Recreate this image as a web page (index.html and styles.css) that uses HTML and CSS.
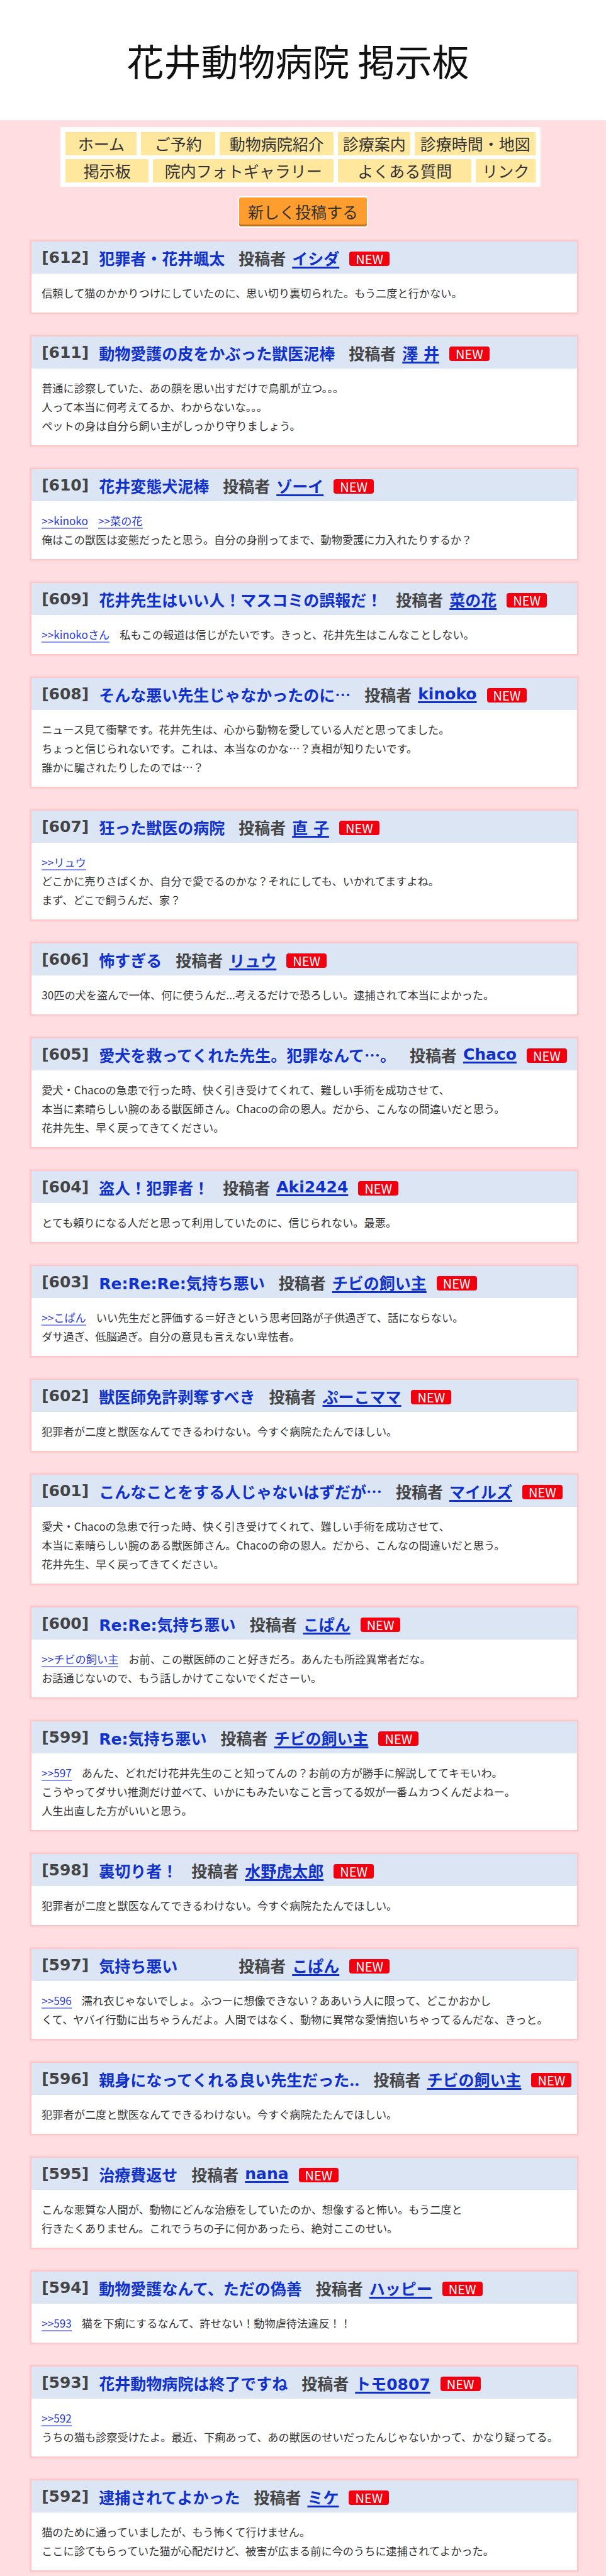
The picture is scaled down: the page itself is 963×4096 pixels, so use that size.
FILE: index.html
```html
<!DOCTYPE html>
<html lang="ja">
<head>
<meta charset="utf-8">
<title>花井動物病院 掲示板</title>
<link rel="stylesheet" href="styles.css">
</head>
<body>
<header class="site-header">
  <h1 class="site-title">花井動物病院 掲示板</h1>
</header>
<main class="board">
  <nav class="gnav">
    <div class="gnav-row gnav-row-1">
      <a class="gnav-item" href="#">ホーム</a>
      <a class="gnav-item" href="#">ご予約</a>
      <a class="gnav-item" href="#">動物病院紹介</a>
      <a class="gnav-item" href="#">診療案内</a>
      <a class="gnav-item" href="#">診療時間・地図</a>
    </div>
    <div class="gnav-row gnav-row-2">
      <a class="gnav-item" href="#">掲示板</a>
      <a class="gnav-item" href="#">院内フォトギャラリー</a>
      <a class="gnav-item" href="#">よくある質問</a>
      <a class="gnav-item" href="#">リンク</a>
    </div>
  </nav>

  <div class="post-action"><a class="btn-post" href="#">新しく投稿する</a></div>

  <ul class="posts">
    <li class="post">
      <div class="post-head"><span class="post-no">[612]</span><a class="post-title" href="#">犯罪者・花井颯太</a><span class="post-by">投稿者</span><a class="post-author" href="#">イシダ</a><span class="badge-new">NEW</span></div>
      <div class="post-body"><p>信頼して猫のかかりつけにしていたのに、思い切り裏切られた。もう二度と行かない。</p></div>
    </li>
    <li class="post">
      <div class="post-head"><span class="post-no">[611]</span><a class="post-title" href="#">動物愛護の皮をかぶった獣医泥棒</a><span class="post-by">投稿者</span><a class="post-author" href="#">澤 井</a><span class="badge-new">NEW</span></div>
      <div class="post-body"><p>普通に診察していた、あの顔を思い出すだけで鳥肌が立つ。。。<br>人って本当に何考えてるか、わからないな。。。<br>ペットの身は自分ら飼い主がしっかり守りましょう。</p></div>
    </li>
    <li class="post">
      <div class="post-head"><span class="post-no">[610]</span><a class="post-title" href="#">花井変態犬泥棒</a><span class="post-by">投稿者</span><a class="post-author" href="#">ゾーイ</a><span class="badge-new">NEW</span></div>
      <div class="post-body"><p><a class="reply" href="#">&gt;&gt;kinoko</a><a class="reply" href="#">&gt;&gt;菜の花</a><br>俺はこの獣医は変態だったと思う。自分の身削ってまで、動物愛護に力入れたりするか？</p></div>
    </li>
    <li class="post">
      <div class="post-head"><span class="post-no">[609]</span><a class="post-title" href="#">花井先生はいい人！マスコミの誤報だ！</a><span class="post-by">投稿者</span><a class="post-author" href="#">菜の花</a><span class="badge-new">NEW</span></div>
      <div class="post-body"><p><a class="reply" href="#">&gt;&gt;kinokoさん</a>私もこの報道は信じがたいです。きっと、花井先生はこんなことしない。</p></div>
    </li>
    <li class="post">
      <div class="post-head"><span class="post-no">[608]</span><a class="post-title" href="#">そんな悪い先生じゃなかったのに…</a><span class="post-by">投稿者</span><a class="post-author" href="#">kinoko</a><span class="badge-new">NEW</span></div>
      <div class="post-body"><p>ニュース見て衝撃です。花井先生は、心から動物を愛している人だと思ってました。<br>ちょっと信じられないです。これは、本当なのかな…？真相が知りたいです。<br>誰かに騙されたりしたのでは…？</p></div>
    </li>
    <li class="post">
      <div class="post-head"><span class="post-no">[607]</span><a class="post-title" href="#">狂った獣医の病院</a><span class="post-by">投稿者</span><a class="post-author" href="#">直 子</a><span class="badge-new">NEW</span></div>
      <div class="post-body"><p><a class="reply" href="#">&gt;&gt;リュウ</a><br>どこかに売りさばくか、自分で愛でるのかな？それにしても、いかれてますよね。<br>まず、どこで飼うんだ、家？</p></div>
    </li>
    <li class="post">
      <div class="post-head"><span class="post-no">[606]</span><a class="post-title" href="#">怖すぎる</a><span class="post-by">投稿者</span><a class="post-author" href="#">リュウ</a><span class="badge-new">NEW</span></div>
      <div class="post-body"><p>30匹の犬を盗んで一体、何に使うんだ...考えるだけで恐ろしい。逮捕されて本当によかった。</p></div>
    </li>
    <li class="post">
      <div class="post-head"><span class="post-no">[605]</span><a class="post-title" href="#">愛犬を救ってくれた先生。犯罪なんて…。</a><span class="post-by">投稿者</span><a class="post-author" href="#">Chaco</a><span class="badge-new">NEW</span></div>
      <div class="post-body"><p>愛犬・Chacoの急患で行った時、快く引き受けてくれて、難しい手術を成功させて、<br>本当に素晴らしい腕のある獣医師さん。Chacoの命の恩人。だから、こんなの間違いだと思う。<br>花井先生、早く戻ってきてください。</p></div>
    </li>
    <li class="post">
      <div class="post-head"><span class="post-no">[604]</span><a class="post-title" href="#">盗人！犯罪者！</a><span class="post-by">投稿者</span><a class="post-author" href="#">Aki2424</a><span class="badge-new">NEW</span></div>
      <div class="post-body"><p>とても頼りになる人だと思って利用していたのに、信じられない。最悪。</p></div>
    </li>
    <li class="post">
      <div class="post-head"><span class="post-no">[603]</span><a class="post-title" href="#"><span class="lat">Re:Re:Re:</span>気持ち悪い</a><span class="post-by">投稿者</span><a class="post-author" href="#">チビの飼い主</a><span class="badge-new">NEW</span></div>
      <div class="post-body"><p><a class="reply" href="#">&gt;&gt;こぱん</a>いい先生だと評価する＝好きという思考回路が子供過ぎて、話にならない。<br>ダサ過ぎ、低脳過ぎ。自分の意見も言えない卑怯者。</p></div>
    </li>
    <li class="post">
      <div class="post-head"><span class="post-no">[602]</span><a class="post-title" href="#">獣医師免許剥奪すべき</a><span class="post-by">投稿者</span><a class="post-author" href="#">ぷーこママ</a><span class="badge-new">NEW</span></div>
      <div class="post-body"><p>犯罪者が二度と獣医なんてできるわけない。今すぐ病院たたんでほしい。</p></div>
    </li>
    <li class="post">
      <div class="post-head"><span class="post-no">[601]</span><a class="post-title" href="#">こんなことをする人じゃないはずだが…</a><span class="post-by">投稿者</span><a class="post-author" href="#">マイルズ</a><span class="badge-new">NEW</span></div>
      <div class="post-body"><p>愛犬・Chacoの急患で行った時、快く引き受けてくれて、難しい手術を成功させて、<br>本当に素晴らしい腕のある獣医師さん。Chacoの命の恩人。だから、こんなの間違いだと思う。<br>花井先生、早く戻ってきてください。</p></div>
    </li>
    <li class="post">
      <div class="post-head"><span class="post-no">[600]</span><a class="post-title" href="#"><span class="lat">Re:Re:</span>気持ち悪い</a><span class="post-by">投稿者</span><a class="post-author" href="#">こぱん</a><span class="badge-new">NEW</span></div>
      <div class="post-body"><p><a class="reply" href="#">&gt;&gt;チビの飼い主</a>お前、この獣医師のこと好きだろ。あんたも所詮異常者だな。<br>お話通じないので、もう話しかけてこないでくださーい。</p></div>
    </li>
    <li class="post">
      <div class="post-head"><span class="post-no">[599]</span><a class="post-title" href="#"><span class="lat">Re:</span>気持ち悪い</a><span class="post-by">投稿者</span><a class="post-author" href="#">チビの飼い主</a><span class="badge-new">NEW</span></div>
      <div class="post-body"><p><a class="reply" href="#">&gt;&gt;597</a>あんた、どれだけ花井先生のこと知ってんの？お前の方が勝手に解説しててキモいわ。<br>こうやってダサい推測だけ並べて、いかにもみたいなこと言ってる奴が一番ムカつくんだよねー。<br>人生出直した方がいいと思う。</p></div>
    </li>
    <li class="post">
      <div class="post-head"><span class="post-no">[598]</span><a class="post-title" href="#">裏切り者！</a><span class="post-by">投稿者</span><a class="post-author" href="#">水野虎太郎</a><span class="badge-new">NEW</span></div>
      <div class="post-body"><p>犯罪者が二度と獣医なんてできるわけない。今すぐ病院たたんでほしい。</p></div>
    </li>
    <li class="post">
      <div class="post-head"><span class="post-no">[597]</span><a class="post-title" href="#">気持ち悪い　　　</a><span class="post-by">投稿者</span><a class="post-author" href="#">こぱん</a><span class="badge-new">NEW</span></div>
      <div class="post-body"><p><a class="reply" href="#">&gt;&gt;596</a>濡れ衣じゃないでしょ。ふつーに想像できない？ああいう人に限って、どこかおかし<br>くて、ヤバイ行動に出ちゃうんだよ。人間ではなく、動物に異常な愛情抱いちゃってるんだな、きっと。</p></div>
    </li>
    <li class="post">
      <div class="post-head"><span class="post-no">[596]</span><a class="post-title" href="#">親身になってくれる良い先生だった..</a><span class="post-by">投稿者</span><a class="post-author" href="#">チビの飼い主</a><span class="badge-new">NEW</span></div>
      <div class="post-body"><p>犯罪者が二度と獣医なんてできるわけない。今すぐ病院たたんでほしい。</p></div>
    </li>
    <li class="post">
      <div class="post-head"><span class="post-no">[595]</span><a class="post-title" href="#">治療費返せ</a><span class="post-by">投稿者</span><a class="post-author" href="#">nana</a><span class="badge-new">NEW</span></div>
      <div class="post-body"><p>こんな悪質な人間が、動物にどんな治療をしていたのか、想像すると怖い。もう二度と<br>行きたくありません。これでうちの子に何かあったら、絶対ここのせい。</p></div>
    </li>
    <li class="post">
      <div class="post-head"><span class="post-no">[594]</span><a class="post-title" href="#">動物愛護なんて、ただの偽善</a><span class="post-by">投稿者</span><a class="post-author" href="#">ハッピー</a><span class="badge-new">NEW</span></div>
      <div class="post-body"><p><a class="reply" href="#">&gt;&gt;593</a>猫を下痢にするなんて、許せない！動物虐待法違反！！</p></div>
    </li>
    <li class="post">
      <div class="post-head"><span class="post-no">[593]</span><a class="post-title" href="#">花井動物病院は終了ですね</a><span class="post-by">投稿者</span><a class="post-author" href="#">トモ0807</a><span class="badge-new">NEW</span></div>
      <div class="post-body"><p><a class="reply" href="#">&gt;&gt;592</a><br>うちの猫も診察受けたよ。最近、下痢あって、あの獣医のせいだったんじゃないかって、かなり疑ってる。</p></div>
    </li>
    <li class="post">
      <div class="post-head"><span class="post-no">[592]</span><a class="post-title" href="#">逮捕されてよかった</a><span class="post-by">投稿者</span><a class="post-author" href="#">ミケ</a><span class="badge-new">NEW</span></div>
      <div class="post-body"><p>猫のために通っていましたが、もう怖くて行けません。<br>ここに診てもらっていた猫が心配だけど、被害が広まる前に今のうちに逮捕されてよかった。</p></div>
    </li>
  </ul>
</main>
</body>
</html>
```

FILE: styles.css
```css
html, body {
  margin: 0;
  padding: 0;
}

body {
  background: #ffdde0;
  font-family: "Noto Sans CJK JP", "Noto Sans", sans-serif;
  color: #333;
}

/* ---------- header ---------- */
.site-header {
  background: #fff;
  height: 191px;
  box-sizing: border-box;
  padding: 56px 16px 0 0;
  text-align: center;
}

.site-title {
  margin: 0;
  font-size: 59px;
  line-height: 80px;
  font-weight: 400;
  color: #111;
}

/* ---------- navigation ---------- */
.gnav {
  margin: 11px 0 0 10%;
  width: 763px;
  box-sizing: border-box;
  background: #fff;
  padding: 8px 8px 7px;
  display: flex;
  flex-direction: column;
  gap: 6px;
}

.gnav-row {
  display: grid;
  column-gap: 7px;
}

.gnav-row-1 {
  grid-template-columns: 113px 118px 181px 115px 1fr;
}

.gnav-row-2 {
  grid-template-columns: 132px 287px 212px 1fr;
}

.gnav-item {
  display: block;
  background: #ffe79e;
  height: 37px;
  line-height: 37px;
  text-align: center;
  font-size: 25px;
  color: #333;
  text-decoration: none;
  white-space: nowrap;
  overflow: hidden;
}

/* ---------- post button ---------- */
.post-action {
  display: flex;
  justify-content: center;
  margin-top: 15px;
}

.btn-post {
  display: block;
  border: 2px solid #fff;
  border-radius: 5px;
  background: #ff9d2f;
  box-shadow: inset 0 -3px 0 #bd6e1f;
  height: 46px;
  line-height: 44px;
  padding: 0 14px;
  font-size: 25px;
  color: #333;
  text-decoration: none;
}

/* ---------- posts ---------- */
.posts {
  list-style: none;
  margin: 20px 0 0;
  padding: 0;
}

.post {
  margin: 0 0 34px 5%;
  width: 90%;
  border: 2px solid #ffc6ca;
  box-shadow: 0 0 3px #ffc0c6;
  background: #fff;
}

.post-head {
  height: 51px;
  display: flex;
  align-items: center;
  padding: 0 16px;
  background: #dbe5f3;
  font-size: 25px;
  font-weight: 700;
  white-space: nowrap;
  color: #444;
}

.post-no {
  font-family: "DejaVu Sans", "Noto Sans CJK JP", sans-serif;
  color: #444;
  margin-right: 16px;
}

.post-title {
  color: #1131cc;
  text-decoration: none;
  white-space: pre;
}

.lat {
  font-family: "DejaVu Sans", "Noto Sans CJK JP", sans-serif;
}

.post-by {
  margin-left: 22px;
  color: #444;
}

.post-author {
  margin-left: 10px;
  color: #1131cc;
  font-family: "DejaVu Sans", "Noto Sans CJK JP", sans-serif;
  text-decoration: underline;
  text-decoration-thickness: 3px;
  text-underline-offset: 3px;
}

.badge-new {
  margin: 4px 0 0 16px;
  background: #f2000f;
  color: #fff;
  font-size: 20px;
  font-weight: 400;
  line-height: 23px;
  padding: 0 10px;
  border-radius: 4px;
}

.post-body {
  padding: 16px;
  font-size: 17.2px;
  line-height: 30px;
  color: #333;
}

.post-body p {
  margin: 0;
}

.reply {
  display: inline-block;
  line-height: 22px;
  color: #2b3cd8;
  text-decoration: none;
  border-bottom: 2px solid #8b95ef;
  margin-right: 16px;
}
```
